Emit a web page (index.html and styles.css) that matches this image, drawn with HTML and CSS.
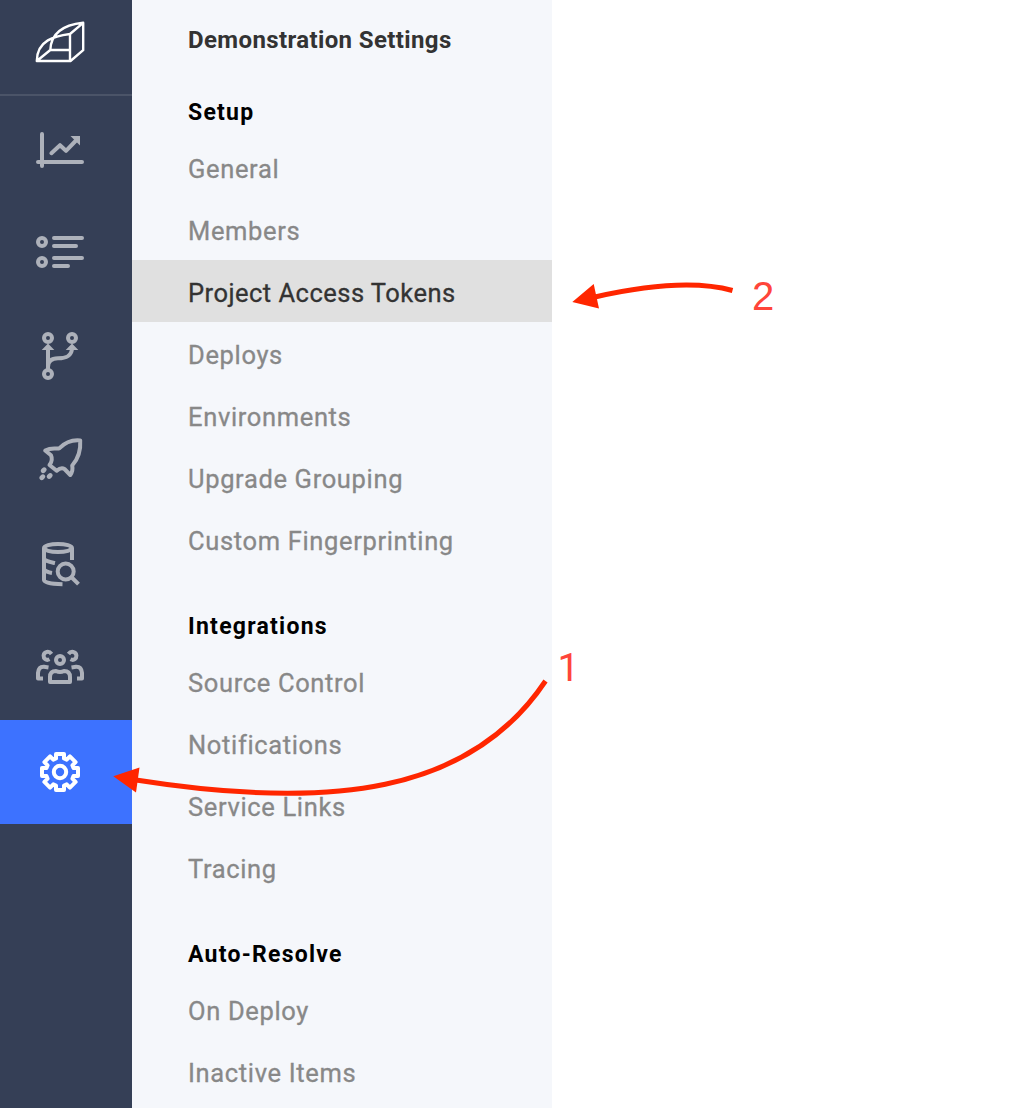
FILE: index.html
```html
<!DOCTYPE html>
<html lang="en">
<head>
<meta charset="utf-8">
<title>Demonstration Settings</title>
<link rel="stylesheet" href="styles.css">
</head>
<body>
<div class="app">
  <nav class="rail">
    <a class="rail-logo">
      <svg width="50" height="42" viewBox="35 21 50 42"><path d="M36.8 61H70.5L83.2 50.2V22.8L70 34V61M70 34C55 36 37 40 36.8 61L50.3 50H70M50.3 50C51 34 62 25 83.2 22.8"/></svg>
    </a>
    <a class="rail-item">
      <svg class="icon" viewBox="0 0 48 48"><path d="M6 10V42M2 38H46M15.4 29.2L24 21.2L30 26.8L40 16.5"/><path class="solid" d="M34.5 12H44V21.5Z"/></svg>
    </a>
    <a class="rail-item">
      <svg class="icon" viewBox="0 0 48 48"><circle cx="6" cy="14" r="4"/><circle cx="6" cy="34" r="4"/><path d="M18 10H46M18 18H40M18 30H46M18 38H32"/></svg>
    </a>
    <a class="rail-item">
      <svg class="icon" viewBox="0 0 48 48"><circle cx="12" cy="6" r="4"/><circle cx="36" cy="6" r="4"/><circle cx="12" cy="42" r="4"/><path d="M12 17V38M12 35C12 29 16 26.3 22 26.3C29 26.3 35 25 36 17"/><path class="solid" d="M12 11.5L18.3 18H5.7ZM36 11.5L42.3 18H29.7Z"/></svg>
    </a>
    <a class="rail-item">
      <svg class="icon rocket" viewBox="0 0 48 48"><path d="M44.2 4.4C35 3.500 29 6.500 23.500 12.200C21 13.500 16 11 9.200 14.500L15 19.300Q17.200 24 13.500 29L20.700 34.800Q25 31 28.500 33L34.300 39Q37.300 35 36.200 29.500C42 23 45 16 44.200 4.400Z"/><g class="dots"><ellipse cx="7.700" cy="34.200" rx="3.200" ry="2.400" transform="rotate(-45 7.700 34.200)"/><ellipse cx="6.300" cy="41.300" rx="3.200" ry="2.400" transform="rotate(-45 6.300 41.300)"/><ellipse cx="13.700" cy="40" rx="3.200" ry="2.400" transform="rotate(-45 13.700 40)"/></g></svg>
    </a>
    <a class="rail-item">
      <svg class="icon flat" viewBox="0 0 48 48"><ellipse cx="22" cy="8" rx="14" ry="4"/><path d="M36 8V20M8 8V40C8 42.500 15 44 26.500 44.300M8 19C10 21.500 14 22 19 23M8 29.500C9.500 31.500 12 32.300 16 33M35.300 37L42.500 44.200"/><circle cx="29.700" cy="31.500" r="8"/></svg>
    </a>
    <a class="rail-item">
      <svg class="icon flat" viewBox="0 0 48 48"><circle cx="24" cy="16" r="4"/><path d="M14 38V33Q14 27 20 27Q24 29 28 27Q34 27 34 33V38ZM13.500 15.300C10 17 7.500 14.500 7.600 11.500C8 7.500 13 6.500 15.500 10M34.500 15.300C38 17 40.500 14.500 40.400 11.500C40 7.500 35 6.500 32.500 10M7 34.500H2V29Q2.500 22.500 8 22.800L12.500 23.500M41 34.500H46V29Q45.500 22.500 40 22.800L35.500 23.500"/></svg>
    </a>
    <a class="rail-item active">
      <svg class="icon" viewBox="-24 -24 48 48"><path d="M-4-13.500V-18H4V-13.500L6.700-12.400L9.900-15.600L15.600-9.900L12.400-6.700L13.500-4H18V4H13.500L12.400 6.700L15.600 9.900L9.900 15.600L6.700 12.400L4 13.500V18H-4V13.500L-6.700 12.400L-9.900 15.600L-15.600 9.900L-12.400 6.700L-13.500 4H-18V-4H-13.500L-12.400-6.700L-15.600-9.900L-9.900-15.600L-6.700-12.400Z"/><circle r="6.200"/></svg>
    </a>
  </nav>
  <aside class="panel">
    <h1 class="panel-title">Demonstration Settings</h1>
    <h2 class="group">Setup</h2>
    <a class="link">General</a>
    <a class="link">Members</a>
    <a class="link current">Project Access Tokens</a>
    <a class="link">Deploys</a>
    <a class="link">Environments</a>
    <a class="link">Upgrade Grouping</a>
    <a class="link">Custom Fingerprinting</a>
    <h2 class="group">Integrations</h2>
    <a class="link">Source Control</a>
    <a class="link">Notifications</a>
    <a class="link">Service Links</a>
    <a class="link">Tracing</a>
    <h2 class="group">Auto-Resolve</h2>
    <a class="link">On Deploy</a>
    <a class="link">Inactive Items</a>
  </aside>
  <svg class="callouts" viewBox="0 0 1018 1108">
    <path class="stroke" d="M545.500 681C470 794 330 810.500 136 780"/>
    <path class="head" d="M113.300 776.300L139.500 767.500L136 792.500Z"/>
    <path class="stroke" d="M732.500 290.500Q683 277 595 297"/>
    <path class="head" d="M572.300 302L593.700 284L599 308.500Z"/>
    <text class="one" x="557.500" y="681">1</text>
    <text x="752" y="310">2</text>
  </svg>
</div>
</body>
</html>
```
FILE: styles.css
```css
body {
  margin: 0;
  background: #fff;
  font-family: Roboto, "Liberation Sans", sans-serif;
}

.app {
  position: relative;
  display: flex;
  width: 1018px;
  height: 1108px;
  overflow: hidden;
}

.rail {
  width: 132px;
  background: #353f56;
}

.rail-logo,
.rail-item {
  display: flex;
  align-items: center;
  justify-content: center;
  box-sizing: border-box;
  padding-right: 12px;
}

.rail-logo {
  height: 96px;
  padding-bottom: 10px;
  border-bottom: 2px solid #4b5468;
}

.rail-logo svg {
  fill: none;
  stroke: #fff;
  stroke-width: 2.4;
  stroke-linejoin: round;
}

.rail-item {
  height: 104px;
  color: #adb1ba;
}

.rail-item.active {
  background: #3d72ff;
  color: #fff;
}

.icon {
  width: 48px;
  height: 48px;
  overflow: visible;
  fill: none;
  stroke: currentColor;
  stroke-width: 4;
  stroke-linecap: round;
  stroke-linejoin: round;
}

.icon.flat {
  stroke-linecap: butt;
}

.icon .solid,
.icon .dots {
  fill: currentColor;
  stroke: none;
}

.panel {
  width: 420px;
  background: #f5f7fb;
}

.panel-title,
.group,
.link {
  display: block;
  box-sizing: border-box;
  margin: 0;
  padding-left: 56px;
  white-space: nowrap;
}

.panel-title {
  height: 56px;
  padding-top: 22px;
  font-size: 24px;
  line-height: 34px;
  font-weight: 700;
  letter-spacing: 0.38px;
  color: #333;
  padding-top: 23px;
}

.group {
  height: 80px;
  padding-top: 34px;
  font-size: 23px;
  line-height: 46px;
  font-weight: 700;
  letter-spacing: 1.25px;
  color: #000;
}

.link {
  height: 62px;
  font-size: 25.5px;
  line-height: 66px;
  letter-spacing: 0.65px;
  color: #888;
  -webkit-text-stroke: 0.3px currentColor;
}

.link.current {
  background: #e0e0e0;
  color: #333;
  letter-spacing: 0.48px;
}

.callouts {
  position: absolute;
  inset: 0;
  width: 1018px;
  height: 1108px;
}

.callouts .stroke {
  fill: none;
  stroke: #ff2600;
  stroke-width: 5;
}

.callouts .head {
  fill: #ff2600;
}

.callouts text {
  font: 40px "Liberation Sans", Arial, sans-serif;
  fill: #ff453a;
}

.callouts .one {
  font: 39px Roboto, sans-serif;
}
```
